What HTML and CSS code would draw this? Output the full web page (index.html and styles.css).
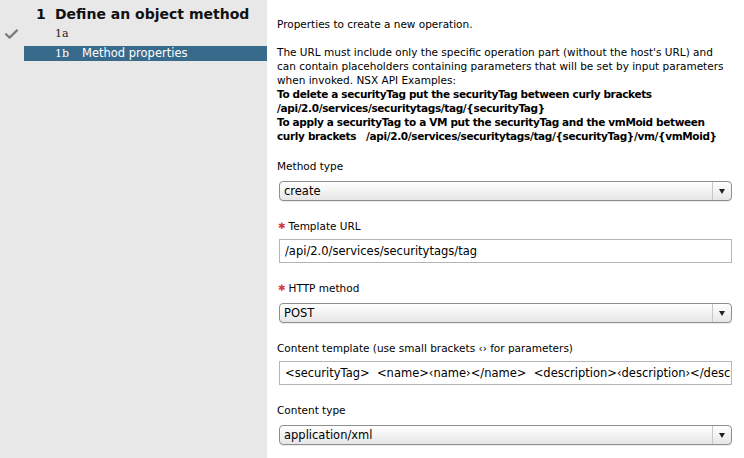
FILE: index.html
```html
<!DOCTYPE html>
<html>
<head>
<meta charset="utf-8">
<link rel="stylesheet" href="styles.css">
</head>
<body>
<div class="app">
  <aside class="sidebar">
    <div class="step-title"><span class="step-num">1</span><span>Define an object method</span></div>
    <div class="sub-row">
      <div class="check-cell">
        <svg width="13" height="10" viewBox="0 0 13 10"><path d="M1 5.2 L4.6 8.6 L12 1.4" fill="none" stroke="#7a7a7a" stroke-width="2.2" stroke-linecap="round" stroke-linejoin="round"/></svg>
      </div>
      <div class="sub-body"><span class="sub-num">1a</span></div>
    </div>
    <div class="sub-row sub-row-active">
      <div class="check-cell"></div>
      <div class="sub-body active"><span class="sub-num">1b</span><span class="sub-name">Method properties</span></div>
    </div>
  </aside>
  <main class="content">
    <div class="desc">
      <p>Properties to create a new operation.</p>
      <p>The URL must include only the specific operation part (without the host's URL) and can contain placeholders containing parameters that will be set by input parameters when invoked. NSX API Examples:<br><b>To delete a securityTag put the securityTag between curly brackets<br>/api/2.0/services/securitytags/tag/{securityTag}<br>To apply a securityTag to a VM put the securityTag and the vmMoid between<br><span class="nowrap">curly brackets &nbsp;&nbsp;/api/2.0/services/securitytags/tag/{securityTag}/vm/{vmMoid}</span></b></p>
    </div>

    <div class="field">
      <div class="label">Method type</div>
      <div class="select"><span class="select-value">create</span><span class="select-arrow"></span></div>
    </div>

    <div class="field">
      <div class="label"><span class="req">&#x2731;</span>Template URL</div>
      <div class="input">/api/2.0/services/securitytags/tag</div>
    </div>

    <div class="field">
      <div class="label"><span class="req">&#x2731;</span>HTTP method</div>
      <div class="select"><span class="select-value">POST</span><span class="select-arrow"></span></div>
    </div>

    <div class="field">
      <div class="label">Content template (use small brackets &#x2039;&#x203A; for parameters)</div>
      <div class="input">&lt;securityTag&gt;&nbsp; &lt;name&gt;&#x2039;name&#x203A;&lt;/name&gt;&nbsp; &lt;description&gt;&#x2039;description&#x203A;&lt;/description&gt;&nbsp; &lt;/securityTag&gt;</div>
    </div>

    <div class="field">
      <div class="label">Content type</div>
      <div class="select"><span class="select-value">application/xml</span><span class="select-arrow"></span></div>
    </div>
  </main>
</div>
</body>
</html>
```

FILE: styles.css
```css
html, body {
  margin: 0;
  padding: 0;
  background: #ffffff;
}
body {
  font-family: "DejaVu Sans", "Liberation Sans", sans-serif;
  font-size: 10.5px;
  color: #000;
}
.app {
  display: flex;
  width: 744px;
  height: 458px;
  overflow: hidden;
}
.sidebar {
  width: 267px;
  flex: none;
  background: #e8e8e8;
  padding-top: 5px;
  box-sizing: border-box;
}
.step-title {
  display: flex;
  height: 18px;
  line-height: 18px;
  font-size: 14px;
  font-weight: bold;
  padding-left: 36px;
  color: #111;
}
.step-num {
  width: 19px;
}
.sub-row {
  display: flex;
  height: 15px;
  margin-top: 3px;
}
.sub-row-active {
  margin-top: 5px;
}
.check-cell {
  width: 24px;
  flex: none;
  display: flex;
  align-items: center;
  padding-left: 5px;
  box-sizing: border-box;
}
.sub-body {
  flex: 1;
  padding-left: 31px;
  line-height: 15px;
  font-size: 11.5px;
  color: #222;
  display: flex;
}
.sub-body.active {
  background: #386a8c;
  color: #fff;
}
.sub-num {
  width: 27px;
  font-family: "DejaVu Serif", serif;
  font-size: 11px;
}
.content {
  flex: 1;
  min-width: 0;
  padding: 17px 12px 0 10px;
}
.desc p {
  margin: 0 0 14px 0;
  line-height: 14px;
}
.desc p:last-child {
  margin-bottom: 16px;
}
.desc b {
  letter-spacing: -0.35px;
}
.nowrap {
  white-space: nowrap;
}
.field {
  margin-bottom: 18px;
}
.label {
  line-height: 14px;
  height: 14px;
  display: flex;
  align-items: center;
}
.req {
  color: #d8393b;
  font-size: 9px;
  margin-left: 1px;
  margin-right: 3px;
}
.select {
  margin: 8px 0 0 2px;
  height: 20px;
  box-sizing: border-box;
  border: 1px solid #8e8e8e;
  border-radius: 4px;
  background: linear-gradient(#ffffff, #f3f3f3 50%, #e6e6e6);
  display: flex;
  align-items: center;
  box-shadow: 0 1px 0 rgba(0,0,0,0.08);
}
.select-value {
  flex: 1;
  padding-left: 4px;
  font-size: 11.5px;
}
.select-arrow {
  width: 18px;
  height: 100%;
  border-left: 1px solid #c8c8c8;
  position: relative;
}
.select-arrow::after {
  content: "";
  position: absolute;
  left: 6px;
  top: 7px;
  border-left: 3.5px solid transparent;
  border-right: 3.5px solid transparent;
  border-top: 5px solid #222;
}
.input {
  margin: 6px 0 0 2px;
  height: 24px;
  box-sizing: border-box;
  border: 1px solid #b5b5b5;
  background: #fff;
  padding-left: 5px;
  line-height: 22px;
  font-size: 11.5px;
  white-space: nowrap;
  overflow: hidden;
}
```
